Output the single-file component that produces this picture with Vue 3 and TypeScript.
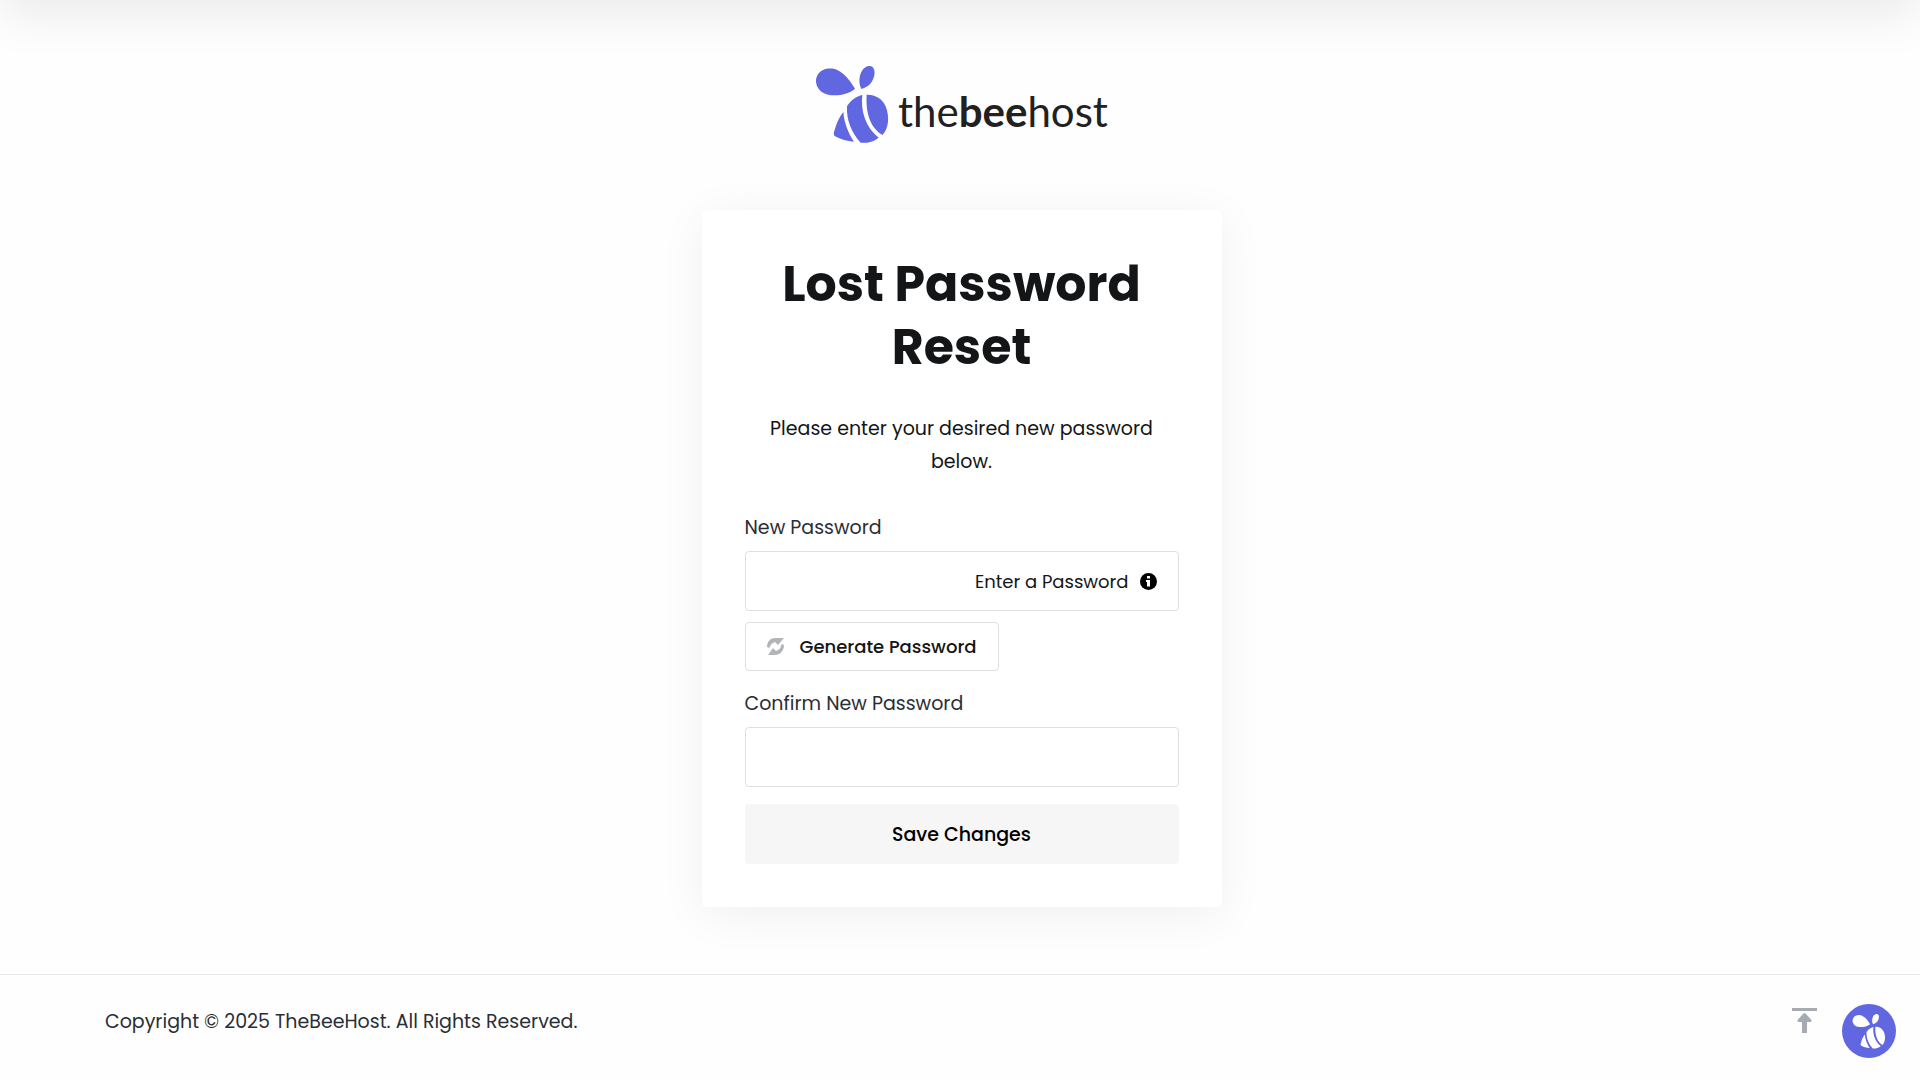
<script setup lang="ts">
import { ref } from 'vue'

const password = ref('')
const confirmation = ref('')

const beePaths: string[] = [
  'M165 118C153 97 137 73 112 61C91 52 65 57 54 74C43 91 47 112 64 126C84 141 132 143 165 118Z',
  'M184 118C175 100 177 77 187 62C195 49 212 44 220 55C228 67 222 88 213 100C205 110 195 115 184 118Z',
  'M200 135C225 134 246 147 256 168C270 200 266 237 247 256C216 237 196 199 200 135Z',
  'M187 136C181 183 197 234 236 264C218 278 199 281 182 279C154 249 139 210 141 170C153 151 169 140 187 136Z',
  'M130 187C132 217 144 250 162 276C139 274 119 268 104 259C99 254 103 243 106 234C112 216 119 201 130 187Z',
]

const generatePassword = (): void => {
  const alphabet = 'ABCDEFGHJKLMNPQRSTUVWXYZabcdefghijkmnpqrstuvwxyz23456789'
  const values = crypto.getRandomValues(new Uint32Array(14))
  password.value = Array.from(values, (n) => alphabet[n % alphabet.length]).join('')
  confirmation.value = password.value
}

const scrollToTop = (): void => window.scrollTo({ top: 0, behavior: 'smooth' })
</script>

<template>
  <div class="page">
    <div class="topbar"></div>
    <main class="main">
      <a class="logo" href="#" aria-label="thebeehost">
        <svg class="logo-mark" viewBox="45 43 225 240" aria-hidden="true">
          <path v-for="d in beePaths" :key="d" :d="d" />
        </svg>
        <span class="logo-text">the<b>bee</b>host</span>
      </a>

      <section class="card">
        <h1 class="title">Lost Password Reset</h1>
        <p class="intro">Please enter your desired new password below.</p>
        <form @submit.prevent>
          <label class="label" for="new-password">New Password</label>
          <div class="field">
            <input id="new-password" v-model="password" class="input" type="password" />
            <span class="hint">Enter a Password</span>
            <svg class="info" viewBox="0 0 17 17" aria-hidden="true">
              <circle cx="8.500" cy="8.500" r="8.500" />
              <path fill="#fff" d="M7 3h3v2.500H7zM6 7H10V13.500H7V9H6z" />
            </svg>
          </div>
          <button class="generate" type="button" @click="generatePassword">
            <svg class="refresh" viewBox="0 0 17 17" aria-hidden="true">
              <path d="M0 9C0 4 3 0 8 0H17L11 7L8 4C5 5 3 7 2.500 10Z" />
              <path d="M17 7C17 13 13 17 8 17H1L6 10L9 13C12 12 14 10 14.500 6Z" />
            </svg>
            <span>Generate Password</span>
          </button>
          <label class="label" for="confirm-password">Confirm New Password</label>
          <div class="field">
            <input id="confirm-password" v-model="confirmation" class="input" type="password" />
          </div>
          <button class="save" type="submit">Save Changes</button>
        </form>
      </section>
    </main>

    <footer class="footer">
      <p class="copyright">Copyright © 2025 TheBeeHost. All Rights Reserved.</p>
      <button class="to-top" type="button" aria-label="Back to top" @click="scrollToTop">
        <svg viewBox="0 0 25 25" aria-hidden="true">
          <path d="M0 0H25V3H0ZM12.500 5Q13 5 14 6L19.500 12Q20 14 18 14H15V25H10V14H7Q5 14 5.500 12L11 6Q12 5 12.500 5Z" />
        </svg>
      </button>
    </footer>

    <button class="chat" type="button" aria-label="Open chat">
      <svg viewBox="45 43 225 240" aria-hidden="true">
        <path v-for="d in beePaths" :key="d" :d="d" />
      </svg>
    </button>
  </div>
</template>

<style>
body {
  background: #fefefe;
}
</style>

<style scoped>
.page {
  min-height: 100vh;
  display: flex;
  flex-direction: column;
  box-sizing: border-box;
  font-family: Poppins, Inter, sans-serif;
  font-size: 19px;
  color: #131517;
  overflow: hidden;
}

.page *,
.page *::before {
  box-sizing: border-box;
}

.topbar {
  height: 80px;
  margin-top: -80px;
  box-shadow: 0 16px 48px rgba(0, 0, 0, 0.08);
}

.main {
  flex: 1;
  display: flex;
  flex-direction: column;
  align-items: center;
  padding: 64px 0 66px 3px;
}

.logo {
  display: flex;
  align-items: center;
  gap: 8px;
  height: 80px;
  margin-bottom: 66px;
  color: #212121;
  text-decoration: none;
}

.logo-mark {
  width: 75px;
  height: 80px;
  fill: #6067e0;
}

.logo-text {
  padding-top: 14px;
  font-family: Lato, sans-serif;
  font-size: 42px;
  line-height: 48px;
}

.card {
  width: 100%;
  max-width: 520px;
  padding: 43px;
  background: #fff;
  border-radius: 5px;
  box-shadow: 0 8px 48px rgba(0, 0, 0, 0.06);
}

.title {
  margin: 0 0 33px;
  font-size: 49px;
  line-height: 63px;
  font-weight: 700;
  text-align: center;
}

.intro {
  margin: 0 0 34px;
  line-height: 33px;
  text-align: center;
}

.label {
  display: block;
  margin-bottom: 7px;
  line-height: 32px;
  color: #2b2e33;
}

.field {
  display: flex;
  align-items: center;
  height: 60px;
  padding: 0 21px;
  border: 1px solid #dddfe0;
  border-radius: 4px;
  background: #fff;
}

.input {
  flex: 1;
  min-width: 0;
  height: 100%;
  padding: 0;
  border: 0;
  outline: 0;
  background: transparent;
  font: inherit;
}

.hint {
  font-size: 18px;
}

.info {
  width: 17px;
  height: 17px;
  margin-left: 11px;
}

.generate {
  display: flex;
  align-items: center;
  gap: 16px;
  height: 49px;
  margin: 11px 0 17px;
  padding: 0 21px;
  border: 1px solid #dddfe0;
  border-radius: 4px;
  background: #fff;
  color: #131517;
  font: inherit;
  font-size: 18px;
  font-weight: 500;
}

.refresh {
  width: 17px;
  height: 17px;
  fill: #b2b5b7;
}

.save {
  display: block;
  width: 100%;
  height: 60px;
  margin-top: 17px;
  border: 0;
  border-radius: 4px;
  background: #f6f6f6;
  color: #000;
  font: inherit;
  font-weight: 500;
}

.footer {
  display: flex;
  align-items: flex-start;
  justify-content: space-between;
  height: 106px;
  padding: 30px 103px 0 105px;
  border-top: 1px solid #e6e7e8;
}

.copyright {
  margin: 0;
  line-height: 33px;
  color: #2b2e33;
}

.to-top {
  width: 25px;
  height: 25px;
  margin-top: 3px;
  padding: 0;
  border: 0;
  background: none;
}

.to-top svg {
  display: block;
  fill: #a6abb2;
}

.chat {
  position: fixed;
  right: 24px;
  bottom: 22px;
  display: grid;
  place-items: center;
  width: 54px;
  height: 54px;
  padding: 0;
  border: 0;
  border-radius: 50%;
  background: #6067e0;
}

.chat svg {
  width: 34px;
  height: 36px;
  fill: #fff;
}
</style>
